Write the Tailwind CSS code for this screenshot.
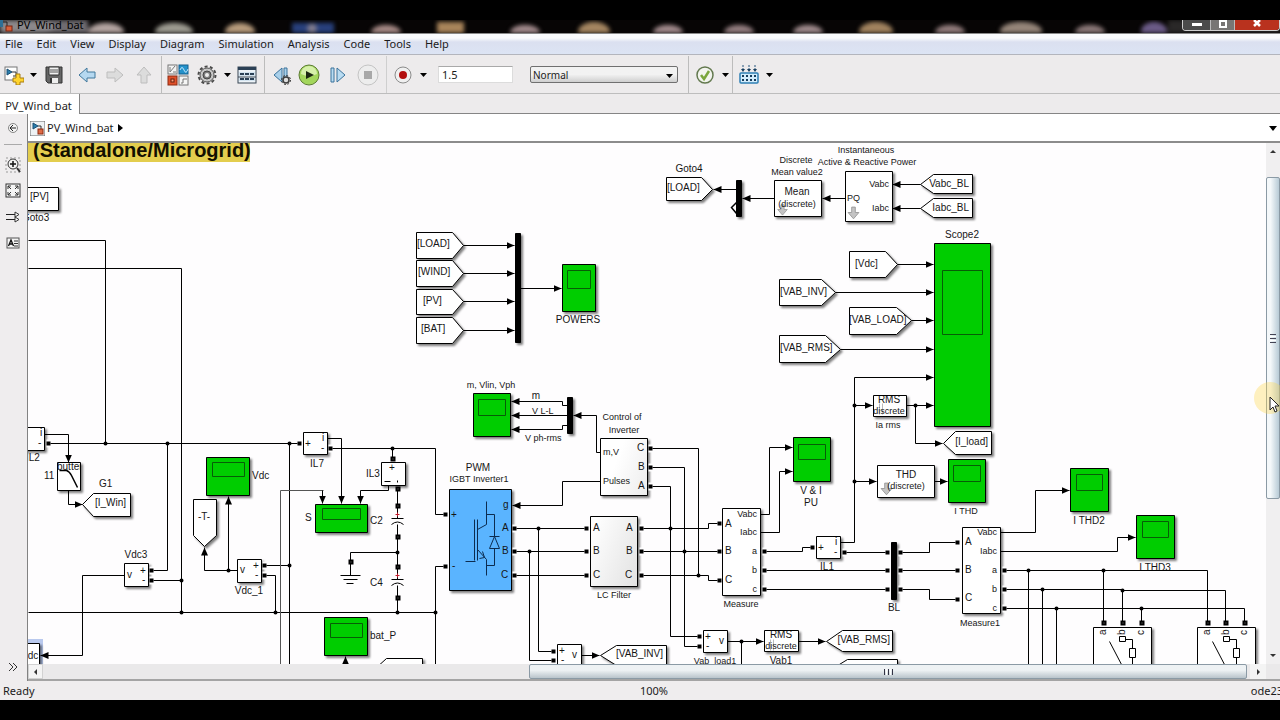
<!DOCTYPE html>
<html lang="en">
<head>
<meta charset="utf-8">
<meta name="viewport" content="width=device-width, initial-scale=1">
<title>PV_Wind_bat</title>
<script src="https://cdn.jsdelivr.net/npm/@tailwindcss/browser@4"></script>
</head>
<body class="flex min-h-screen flex-col overflow-hidden bg-black font-['Noto_Sans',sans-serif] text-[11px] text-[#1b1b1b]">

<!-- Window title bar -->
<header class="relative mt-5 flex h-[14px] shrink-0 items-start justify-between overflow-hidden border-b border-[#8a8a8a] bg-[#070505]">
  <svg class="absolute inset-0 h-full w-full blur-[2px]" viewBox="0 0 1280 14" preserveAspectRatio="none" aria-hidden="true">
    <rect x="0" y="0" width="88" height="14" fill="#6f6b70"/><ellipse cx="25" cy="7" rx="30" ry="9" fill="#8b888b"/>
    <ellipse cx="106" cy="13" rx="18" ry="10" fill="#b3a3a0"/><ellipse cx="174" cy="13" rx="19" ry="10" fill="#9c9a90"/>
    <ellipse cx="240" cy="13" rx="15" ry="10" fill="#b79b7c"/><rect x="292" y="3" width="42" height="12" fill="#28407c"/><circle cx="312" cy="9" r="5" fill="#7f7a8c"/>
    <ellipse cx="386" cy="14" rx="15" ry="9" fill="#a78a86"/><rect x="437" y="2" width="27" height="14" fill="#a8845a"/>
    <ellipse cx="525" cy="14" rx="15" ry="9" fill="#a28a8c"/><ellipse cx="594" cy="13" rx="16" ry="11" fill="#a48560"/>
    <ellipse cx="668" cy="14" rx="15" ry="9" fill="#a28a8c"/><ellipse cx="739" cy="14" rx="15" ry="9" fill="#947e80"/>
    <ellipse cx="808" cy="14" rx="15" ry="9" fill="#9f8a8c"/><ellipse cx="876" cy="13" rx="17" ry="11" fill="#a0825e"/>
    <ellipse cx="950" cy="14" rx="15" ry="9" fill="#927c7c"/><ellipse cx="1021" cy="12" rx="21" ry="10" fill="#948478"/>
    <ellipse cx="1090" cy="14" rx="15" ry="9" fill="#8b7878"/><ellipse cx="1154" cy="12" rx="13" ry="10" fill="#6a5a86"/>
    <rect x="1168" y="0" width="112" height="14" fill="#2a2828"/>
  </svg>
  <div class="relative flex h-full items-start">
    <svg class="h-[13px] w-4" viewBox="0 0 16 13" aria-hidden="true"><path d="M0 0h3v7H0z" fill="#2c6f96"/><path d="M3 2h4v5" fill="none" stroke="#222"/><rect x="6" y="6" width="6" height="5" fill="#d9603a" stroke="#7a2410"/></svg>
    <h1 class="pl-px leading-[10px] text-black">PV_Wind_bat</h1>
  </div>
  <div class="relative flex h-[11px] overflow-hidden rounded-b border-x border-b border-[#cfcfcf]">
    <button aria-label="Minimize" class="flex w-7 justify-center border-r border-[#bbb] bg-[#4b4b4b]"><span class="mt-[3px] block h-[3px] w-[10px] bg-white"></span></button>
    <button aria-label="Maximize" class="flex w-6 justify-center border-r border-[#bbb] bg-[#787674]"><span class="block h-2 w-2 border-2 border-white"></span></button>
    <button aria-label="Close" class="flex w-11 justify-center bg-[#b9321e]"><svg class="h-[7px] w-[10px]" viewBox="0 0 10 7"><path d="M2 0l6 6M8 0L2 6" stroke="#fff" stroke-width="2.5"/></svg></button>
  </div>
</header>

<!-- Menu -->
<nav class="flex h-[21px] shrink-0 items-center gap-[14px] border-b border-[#b3b5bd] bg-linear-to-b from-[#fafbfd] from-20% via-[#dbe0f0] via-40% to-[#dce4f4] pl-[5px] pt-px">
  <button>File</button><button>Edit</button><button>View</button><button>Display</button><button>Diagram</button><button>Simulation</button><button>Analysis</button><button>Code</button><button>Tools</button><button>Help</button>
</nav>

<!-- Toolbar -->
<div class="flex h-[39px] shrink-0 items-stretch border-b border-[#bdbdbd] bg-[#edebec] pt-px">
  <button aria-label="New model" class="flex w-7 items-center justify-center"><svg class="h-5 w-5" viewBox="0 0 20 20"><rect x="1" y="2" width="12" height="13" fill="#fff" stroke="#777"/><path d="M3 4l5 3-5 3z" fill="#2a7fae" stroke="#1b4f73"/><path d="M8 7h4v4M9 11h5" fill="none" stroke="#333"/><path d="M12 9h4v4h4v4h-4v3h-4v-3H9v-4h3z" fill="#ffd42e" stroke="#a77d10"/></svg></button>
  <button aria-label="New model options" class="flex w-[10px] items-center justify-center"><svg class="h-1 w-[7px]" viewBox="0 0 7 4"><path d="M0 0h7L3.500 4z"/></svg></button>
  <button aria-label="Save" class="flex w-8 items-center justify-center"><svg class="h-[18px] w-[18px]" viewBox="0 0 18 18"><path d="M1 1h16v16H3l-2-2z" fill="#666" stroke="#333"/><path d="M4 1h10v8H4z" fill="#f1f1f1" stroke="#333"/><path d="M5 4h8M5 6h8" stroke="#555"/><path d="M5 12h8v5H5z" fill="#eee"/><path d="M7 12v5h-2v-5z" fill="#333"/></svg></button>
  <span class="w-px bg-[#bcbcbc]"></span>
  <button aria-label="Back" class="flex w-8 items-center justify-center"><svg class="h-4 w-[18px]" viewBox="0 0 18 16"><path d="M1 8l8-7v4h8v6H9v4z" fill="#b5d8f0" stroke="#41789c"/></svg></button>
  <button aria-label="Forward" class="flex w-6 items-center justify-center"><svg class="h-4 w-[18px]" viewBox="0 0 18 16"><path d="M17 8L9 1v4H1v6h8v4z" fill="#dcdcdc" stroke="#bdbdbd"/></svg></button>
  <button aria-label="Up to parent" class="flex w-[34px] items-center justify-center"><svg class="h-[18px] w-4" viewBox="0 0 16 18"><path d="M8 1l7 8h-4v8H5V9H1z" fill="#dcdcdc" stroke="#bdbdbd"/></svg></button>
  <span class="w-px bg-[#bcbcbc]"></span>
  <button aria-label="Library browser" class="flex w-8 items-center justify-center"><svg class="h-[22px] w-[22px]" viewBox="0 0 22 22"><rect x="1" y="1" width="9" height="9" fill="#f3f3f3" stroke="#777"/><path d="M3 3v5M3 8l5-6M6 8h3" fill="none" stroke="#777"/><rect x="12" y="1" width="9" height="9" fill="#2492cb" stroke="#155f8c"/><path d="M13 6q2-5 4 0t4-1" fill="none" stroke="#bfe4fa"/><rect x="1" y="12" width="9" height="9" fill="#e0502a" stroke="#8d2a10"/><rect x="4" y="15" width="3" height="3" fill="#ff9a78" stroke="#64200e"/><rect x="12" y="12" width="9" height="9" fill="#f5f5f5" stroke="#777"/><path d="M14 19h2v-4h4" fill="none" stroke="#777"/></svg></button>
  <button aria-label="Model configuration" class="flex w-[26px] items-center justify-center"><svg class="h-5 w-5" viewBox="0 0 20 20"><circle cx="10" cy="10" r="8.500" fill="none" stroke="#4a4a4a" stroke-width="2" stroke-dasharray="3 2.340"/><circle cx="10" cy="10" r="7" fill="#c6c6c6" stroke="#555"/><circle cx="10" cy="10" r="4" fill="#7d7d7d" stroke="#444"/><circle cx="10" cy="10" r="2" fill="#ececec"/></svg></button>
  <button aria-label="Configuration options" class="flex w-[14px] items-center justify-center"><svg class="h-1 w-[7px]" viewBox="0 0 7 4"><path d="M0 0h7L3.500 4z"/></svg></button>
  <button aria-label="Model explorer" class="mr-1 flex w-[26px] items-center justify-center"><svg class="h-[18px] w-5" viewBox="0 0 20 18"><rect x="1" y="1" width="18" height="16" fill="#edf3f8" stroke="#394754"/><path d="M1 1h18v3H1z" fill="#2b4055"/><path d="M2 6h16v4H2zM2 12h16v3H2z" fill="#d4e4f0"/><path d="M3 8h14M3 13h14" stroke="#2b4055" stroke-width="2" stroke-dasharray="4 1"/><path d="M1 11h18" stroke="#394754"/></svg></button>
  <span class="w-px bg-[#bcbcbc]"></span>
  <button aria-label="Step back" class="flex w-[34px] items-center justify-center"><svg class="h-5 w-5" viewBox="0 0 20 20"><path d="M10 3v14L2 10z" fill="#a9d0ea" stroke="#3a729b"/><path d="M12 3h3v14h-3z" fill="#a9d0ea" stroke="#3a729b"/><circle cx="14" cy="15" r="3" fill="#ddd" stroke="#3c3c3c" stroke-width="1.500"/><circle cx="14" cy="15" r="4.500" fill="none" stroke="#3c3c3c" stroke-width="1" stroke-dasharray="2 1.500"/></svg></button>
  <button aria-label="Run" class="flex w-5 items-center justify-center"><svg class="h-[22px] w-5 overflow-visible" viewBox="0 0 20 22"><circle cx="10" cy="11" r="10" fill="#a3d65c" stroke="#5c7c33"/><path d="M2 10a8 8 0 0116 0q-8 4-16 0z" fill="#d6f0aa"/><path d="M7 7l8 4-8 4z" fill="#1c2811"/></svg></button>
  <button aria-label="Step forward" class="flex w-[38px] items-center justify-center"><svg class="h-4 w-4" viewBox="0 0 16 16"><path d="M1 1h3v14H1zM7 1l8 7-8 7z" fill="#b9dcf2" stroke="#3a729b"/></svg></button>
  <button aria-label="Stop" class="mr-[7px] flex w-[22px] items-center justify-center"><svg class="h-[22px] w-[22px]" viewBox="0 0 22 22"><circle cx="11" cy="11" r="10" fill="#ededed" stroke="#c4c4c4"/><rect x="7" y="7" width="8" height="8" fill="#a8a8a8"/></svg></button>
  <span class="w-px bg-[#cfcfcf]"></span>
  <button aria-label="Record" class="flex w-8 items-center justify-center"><svg class="h-[18px] w-[18px]" viewBox="0 0 18 18"><circle cx="9" cy="9" r="8" fill="#f0f0f0" stroke="#8b8b8b"/><circle cx="9" cy="9" r="4" fill="#b30f0f"/></svg></button>
  <button aria-label="Record options" class="flex w-2 items-center justify-center"><svg class="h-1 w-[7px]" viewBox="0 0 7 4"><path d="M0 0h7L3.500 4z"/></svg></button>
  <input aria-label="Simulation stop time" value="1.5" class="my-[10px] ml-[11px] w-[75px] border border-[#dcdcdc] border-t-[#a9a9a9] bg-white pl-[3px] pt-[2px] outline-none">
  <div class="relative my-[10px] ml-[17px] w-[148px]">
    <select aria-label="Simulation mode" class="h-full w-full appearance-none rounded-xs border border-[#707070] bg-linear-to-b from-[#f2f2f2] from-50% to-[#cfcfcf] pl-[2px] text-[10px] leading-[16px] outline-none"><option>Normal</option></select>
    <svg class="pointer-events-none absolute right-[5px] top-2 h-1 w-[7px]" viewBox="0 0 7 4"><path d="M0 0h7L3.500 4z"/></svg>
  </div>
  <span class="ml-[10px] w-px bg-[#bcbcbc]"></span>
  <button aria-label="Model advisor" class="flex w-8 items-center justify-center"><svg class="h-[18px] w-[18px]" viewBox="0 0 18 18"><circle cx="9" cy="9" r="8" fill="#f2f4ee" stroke="#63794f" stroke-width="1.500"/><path d="M5 9l3 4 5-8" fill="none" stroke="#7aa63c" stroke-width="2.500"/></svg></button>
  <button aria-label="Advisor options" class="mr-[3px] flex w-2 items-center justify-center"><svg class="h-1 w-[7px]" viewBox="0 0 7 4"><path d="M0 0h7L3.500 4z"/></svg></button>
  <span class="w-px bg-[#bcbcbc]"></span>
  <button aria-label="Build model" class="flex w-8 items-center justify-center"><svg class="h-5 w-5" viewBox="0 0 20 20"><path d="M4 0v5M10 0v5M16 0v5" stroke="#24557c" stroke-dasharray="2 1"/><path d="M2 4h4L4 7zM8 4h4l-2 3zM14 4h4l-2 3z" fill="#173d5c"/><rect x="1" y="8" width="18" height="10" rx="1" fill="#d3ecfb" stroke="#2e7fb4" stroke-width="1.500"/><path d="M3 11h14M3 15h14" stroke="#173d5c" stroke-width="2" stroke-dasharray="2 2"/></svg></button>
  <button aria-label="Build options" class="flex w-2 items-center justify-center"><svg class="h-1 w-[7px]" viewBox="0 0 7 4"><path d="M0 0h7L3.500 4z"/></svg></button>
</div>

<!-- Document tabs -->
<div class="flex h-5 shrink-0 bg-[#edebec]">
  <button class="w-20 border-r border-[#858585] bg-white pr-[2px] pt-[3px] text-center leading-4">PV_Wind_bat</button>
  <div class="flex-1 border-b border-[#858585]"></div>
</div>

<main class="flex flex-1 bg-[#efedee]">
  <!-- Editor palette -->
  <aside class="flex w-7 shrink-0 flex-col items-center border-r border-[#828282] pr-[2px] pt-2">
    <button aria-label="Hide browser"><svg class="h-3 w-3" viewBox="0 0 12 12"><circle cx="6" cy="6" r="4.500" fill="#f4f4f4" stroke="#888"/><path d="M9 6H4M6 3L3 6l3 3" fill="none" stroke="#222"/></svg></button>
    <span class="mt-[10px] h-px w-[18px] bg-[#aaa]"></span>
    <button aria-label="Zoom" class="mt-[11px]"><svg class="h-[18px] w-[18px]" viewBox="0 0 18 18"><rect x="2" y="2" width="14" height="14" fill="none" stroke="#999" stroke-dasharray="2 2"/><circle cx="9" cy="8" r="5" fill="#f2f2f2" stroke="#333"/><path d="M6 8h6M9 5v6" stroke="#111" stroke-width="1.500"/><path d="M13 12l3 4" stroke="#333" stroke-width="2"/></svg></button>
    <button aria-label="Fit to view" class="mt-[9px]"><svg class="h-[15px] w-4" viewBox="0 0 16 15"><rect x="1" y="1" width="14" height="13" fill="#f4f4f4" stroke="#333"/><path d="M3 6V3h3M10 3h3v3M13 9v3h-3M6 12H3V9M3 3l3 3M13 3l-3 3M13 12l-3-3M3 12l3-3" fill="none" stroke="#333"/></svg></button>
    <button aria-label="Sample time" class="mt-[13px]"><svg class="h-3 w-[14px]" viewBox="0 0 14 12"><path d="M0 3.500h10M0 8.500h10" stroke="#222"/><path d="M9 1l4 2.500L9 6zM9 6l4 2.500L9 11z" fill="#fff" stroke="#333"/></svg></button>
    <button aria-label="Annotation" class="mt-[14px]"><svg class="h-3 w-[14px]" viewBox="0 0 14 12"><rect x="1" y="1" width="12" height="10" fill="#f4f4f4" stroke="#555"/><path d="M2.500 9L5 3l2.500 6M3.500 7h3" fill="none" stroke="#111" stroke-width="1.300"/><path d="M8 4h4M8 6.500h4M8 9h4" stroke="#333"/></svg></button>
    <button aria-label="More tools" class="mb-2 mt-auto"><svg class="h-3 w-3" viewBox="0 0 12 12"><path d="M2 2l4 4-4 4M6 2l4 4-4 4" fill="none" stroke="#333"/></svg></button>
  </aside>

  <section class="flex min-w-0 flex-1 flex-col">
    <!-- Model path -->
    <div class="flex h-[29px] shrink-0 items-center border-b-2 border-[#8c8c8c] bg-white pt-px">
      <svg class="ml-[2px] h-[15px] w-[15px]" viewBox="0 0 15 15" aria-hidden="true"><rect x="0" y="0" width="15" height="15" fill="#eef2f4" stroke="#666"/><path d="M3 2l5 3-5 3z" fill="#2a7fae" stroke="#1b4f73"/><path d="M8 5h3v4" fill="none" stroke="#333"/><rect x="8" y="8" width="5" height="5" fill="#df6a45" stroke="#8d2a10"/></svg>
      <a href="#" class="ml-[2px]">PV_Wind_bat</a>
      <svg class="ml-1 h-2 w-[5px]" viewBox="0 0 5 8" aria-hidden="true"><path d="M0 0l5 4-5 4z"/></svg>
      <button aria-label="Path history" class="ml-auto pr-[3px]"><svg class="h-[5px] w-2" viewBox="0 0 8 5"><path d="M0 0h8L4 5z"/></svg></button>
    </div>

    <div class="flex flex-1">
      <!-- Block diagram -->
      <div class="relative min-w-0 flex-1 overflow-hidden bg-[#fefdfe]">
        <svg width="1238" height="521" viewBox="28 143 1238 521" role="img" aria-label="PV_Wind_bat block diagram" class="block">
          <defs>
            <marker id="arrow" markerUnits="userSpaceOnUse" markerWidth="8" markerHeight="8" refX="8" refY="4" orient="auto"><path d="M0 0.500L8 4L0 7.500z"/></marker>
            <clipPath id="clipButter"><rect x="57" y="463" width="23" height="27"/></clipPath>
            <clipPath id="clipRms"><rect x="873" y="396" width="33" height="20"/></clipPath>
            <clipPath id="clipRms2"><rect x="764" y="631" width="34" height="20"/></clipPath>
            <clipPath id="clipThd"><rect x="1130" y="560" width="50" height="10"/></clipPath>
            <linearGradient id="subsystem" x1="0" y1="0" x2="1" y2="1"><stop offset="0.300" stop-color="#fff"/><stop offset="1" stop-color="#dedede"/></linearGradient>
            <path id="gray-down" d="M-2 -6h4v6h4l-6 7-6-7h4z"/>
            <path id="ports" d="M46 443h4M262 565h4M262 575h4M149 570h4M149 580h4M297 443h4M328 448h4M443 514h4M443 566h4M512 528h4M512 551h4M512 575h4M648 448h4M648 467h4M648 486h4M584 528h4M584 551h4M584 575h4M639 528h4M639 551h4M639 575h4M551 651h4M551 660h4M697 636h4M697 646h4M717 523h4M717 551h4M717 580h4M762 551h4M762 570h4M762 589h4M810 547h4M842 552h4M885 552h4M885 570h4M885 589h4M898 552h4M898 570h4M898 589h4M955 542h4M955 570h4M955 599h4M1002 570h4M1002 589h4M1002 608h4"/>
          </defs>

          <rect x="28" y="143" width="222" height="19" fill="#e3cd4e"/>
          <rect x="28" y="639" width="15" height="25" fill="#b9c9ee"/>

          <g transform="translate(0.500 0.500)" stroke="#000" fill="#fff">
            <g class="drop-shadow-[2px_2px_1px_rgba(0,0,0,0.5)]">
              <path d="M20 187H58V210H20zM20 427H44V450H20zM57 462H80V490H57zM82 504L93 493H130V516H93zM193 499H216V535L204 546L193 535zM237 559H261V582H237zM124 563H148V586H124zM20 643H39V670H20zM303 432H327V454H303zM381 462H405V485H381zM375 668L386 658H422V670z"/>
              <path d="M416 232H452L463 245L452 258H416zM416 260H452L463 273L452 286H416zM416 289H452L463 301L452 314H416zM416 317H452L463 330L452 343H416z"/>
              <path d="M557 644H581V670H557zM600 655L616 645H666V670H624zM703 630H727V652H703zM764 630H798V651H764zM826 641L842 630H892V651H842zM834 667L847 659H897V670z"/>
              <path d="M722 508H760V595H722zM816 536H840V558H816zM962 527H1000V613H962zM873 395H906V416H873zM943 443L955 431H991V454H955zM877 465H934V497H877z"/>
              <path d="M666 177H701L712 189L701 200H666zM774 180H821V216H774zM845 171H892V221H845zM920 184L933 174H972V193H933zM920 208L933 198H972V217H933z"/>
              <path d="M849 251H885L897 264L885 277H849zM779 279H821L835 292L821 305H779zM849 307H896L911 320L896 334H849zM779 335H825L840 349L825 362H779zM1093 627H1151V670H1093zM1197 627H1255V670H1197z"/>
              <path fill="url(#subsystem)" d="M600 438H647V495H600zM590 516H637V586H590z"/>
              <path fill="#00cd00" d="M206 457H249V495H206zM315 504H367V532H315zM324 617H367V655H324zM473 393H510V436H473zM562 264H595V311H562zM793 437H830V481H793zM948 459H985V502H948zM934 243H990V426H934zM1070 468H1108V511H1070zM1136 515H1174V558H1136z"/>
              <path fill="#5ab4ff" d="M449 489H511V590H449z"/>
              <path fill="#000" d="M515 233H520V342H515zM567 397H572V433H567zM736 180H741V216H736zM891 542H896V599H891z"/>
            </g>

            <g fill="none">
              <path stroke="#075d07" d="M212 462H244V476H212zM322 508H360V519H322zM330 623H362V637H330zM478 399H505V415H478zM567 270H590V288H567zM798 444H825V459H798zM953 465H980V481H953zM942 270H982V334H942zM1076 474H1102V490H1076zM1142 521H1168V537H1142z"/>
              <use href="#ports" stroke="#fefdfe" stroke-width="8"/>
              <!-- Signal and power lines -->
              <path d="M28 240H105V443M28 268H181V612M50 443H297M266 565H289M266 575H275V612M153 570H167V443M153 580H181M28 612H435M289 443V664M332 448H435V514H443M392 448V458M443 566H435V664"/>
              <path stroke="#555" d="M280 664V490H323"/>
              <path d="M516 528H584M516 551H584M516 575H584M538 528V651H551M529 551V660H551M652 448H698V575M652 467H684V646H697M652 486H670V636H697M643 528H708V523H717M643 551H717M643 575H708V580H717"/>
              <path d="M766 551H802V547H810M766 570H885M766 589H885M846 552H885M902 552H929V542H955M902 570H955M902 589H929V599H955M741 641V664M840 542H854V377"/>
              <path d="M1006 570H1207V621M1006 589H1122V590H1225V621M1006 608H1244V621M1028 570V664M1042 589V664M1056 608V664M1103 570V621M1122 590V621M1141 608V621"/>
              <path d="M397 487V518M397 524V579M397 585V612M391 518H403M391 524Q397 519 403 524M391 579H403M391 585Q397 580 403 585M397 552H350V575M340 575H360M343 579H357M346 583H353"/>
              <path stroke="#c01c2c" d="M395 514H399M397 512V516M395 575H399M397 573V577"/>
              <g marker-end="url(#arrow)">
                <path d="M44 434H68V462"/><path d="M68 490V504H82"/><path d="M228 570V496"/><path d="M237 570H204V547"/><path d="M124 575H82V655H40"/>
                <path d="M327 438H341V503"/><path d="M388 485V490H360V503"/><path d="M322 490V503"/><path d="M345 664V656"/>
                <path d="M463 245H514"/><path d="M463 273H514"/><path d="M463 301H514"/><path d="M463 330H514"/><path d="M520 288H561"/>
                <path d="M567 405H562V401H511"/><path d="M567 415H511"/><path d="M567 425H562V429H511"/><path d="M600 452H596V415H573"/><path d="M600 481H562V505H512"/>
                <path d="M581 655H599"/><path d="M727 641H763"/><path d="M798 641H825"/>
                <path d="M760 514H769V447H792"/><path d="M760 532H779V471H792"/><path d="M854 377H933"/><path d="M854 405H872"/><path d="M906 405H933"/><path d="M915 405V443H942"/><path d="M854 481H876"/><path d="M934 481H947"/>
                <path d="M736 189H713"/><path d="M774 198H742"/><path d="M845 198H822"/><path d="M920 184H892"/><path d="M920 208H892"/>
                <path d="M897 264H933"/><path d="M835 292H933"/><path d="M911 320H933"/><path d="M840 349H933"/>
                <path d="M1000 532H1035V490H1069"/><path d="M1000 551H1117V537H1135"/>
              </g>
              <use href="#ports" stroke-width="4"/>
              <path fill="#777" stroke-width="2" d="M391 457H394V460H391zM396 487H399V490H396zM396 504H399V507H396zM396 535H399V538H396zM396 565H399V568H396zM396 596H399V599H396zM349 560H352V563H349zM1102 621H1105V624H1102zM1121 621H1124V624H1121zM1140 621H1143V624H1140zM1206 621H1209V624H1206zM1224 621H1227V624H1224zM1243 621H1246V624H1243z"/>
              <path stroke-width="4" stroke-linecap="round" d="M105 443h.01M167 443h.01M289 443h.01M181 580h.01M181 612h.01M228 570h.01M275 612h.01M289 565h.01M392 448h.01M397 552h.01M397 612h.01M435 612h.01M538 528h.01M529 551h.01M670 528h.01M684 551h.01M698 575h.01M741 641h.01M854 405h.01M854 481h.01M915 405h.01M1028 570h.01M1042 589h.01M1056 608h.01M1103 570h.01M1122 590h.01M1141 608h.01"/>
              <!-- Block artwork -->
              <path stroke-width="1.500" d="M59 470H66Q69 471 71 475L77 487M736 202L731 207L736 213"/>
              <path stroke="#0c2c50" d="M474 519V560M477 519V560M465 561H475M486 501V524L477 529M477 549L486 559V575M486 514H494V536M489 536H499M489 548H499L494 536zM494 548V565H486M479 558L484 557L482 551"/>
              <path d="M384 481H390M397 480V482M1119 636H1125V641H1119zM1125 639H1132V648M1129 648H1135V657H1129zM1132 657V664M1109 641L1121 664M1223 636H1229V641H1223zM1229 639H1236V648M1233 648H1239V657H1233zM1236 657V664M1212 641L1224 664"/>
            </g>
            <g fill="#c4c4c4" stroke="#999">
              <use href="#gray-down" transform="translate(782 209) scale(.8)"/><use href="#gray-down" transform="translate(853 212) scale(.9)"/><use href="#gray-down" transform="translate(886 488) scale(.9)"/>
              <path stroke="#bbb" fill="none" d="M879 403V414M882 403V414M770 639V650M773 639V650"/>
            </g>
          </g>

          <g class="font-['Liberation_Sans',Arial,sans-serif] text-[10px]" fill="#161616">
            <text x="33" y="157" class="text-[20px] font-bold" fill="#120f00">(Standalone/Microgrid)</text>
            <text x="30" y="200">[PV]</text><text x="22" y="221">Goto3</text>
            <text x="40" y="436">i</text><text x="38" y="446">-</text><text x="26" y="461">IL2</text>
            <text x="57" y="470" clip-path="url(#clipButter)">butter</text><text x="44" y="479">11</text><text x="99" y="487">G1</text><text x="95" y="506">[I_Win]</text>
            <text x="252" y="479">Vdc</text><text x="204" y="520" text-anchor="middle">-T-</text>
            <text x="240" y="573">v</text><text x="253" y="569">+</text><text x="255" y="578">-</text><text x="249" y="594" text-anchor="middle">Vdc_1</text>
            <text x="127" y="578">v</text><text x="140" y="574">+</text><text x="142" y="583">-</text><text x="136" y="558" text-anchor="middle">Vdc3</text><text x="21" y="659">Vdc</text>
            <text x="305" y="447">+</text><text x="322" y="441">i</text><text x="321" y="451">-</text><text x="317" y="467" text-anchor="middle">IL7</text>
            <text x="366" y="477">IL3</text><text x="389" y="471">+</text><text x="305" y="521">S</text><text x="370" y="524">C2</text><text x="370" y="586">C4</text><text x="370" y="639">bat_P</text>
            <text x="478" y="471" text-anchor="middle">PWM</text><text x="479" y="482" class="text-[9px]" text-anchor="middle">IGBT Inverter1</text>
            <text x="451" y="518">+</text><text x="452" y="569">-</text><text x="503" y="508">g</text><text x="502" y="531">A</text><text x="502" y="554">B</text><text x="501" y="578">C</text>
            <text x="491" y="388" class="text-[9px]" text-anchor="middle">m, Vlin, Vph</text><text x="536" y="399" text-anchor="middle">m</text><text x="532" y="414" class="text-[9px]">V L-L</text><text x="525" y="441" class="text-[9px]">V ph-rms</text>
            <text x="417" y="247">[LOAD]</text><text x="418" y="275">[WIND]</text><text x="423" y="304">[PV]</text><text x="421" y="332">[BAT]</text><text x="578" y="323" text-anchor="middle">POWERS</text>
            <g class="text-[9px]" text-anchor="middle"><text x="622" y="420">Control of</text><text x="624" y="433">Inverter</text></g>
            <text x="603" y="455" class="text-[9px]">m,V</text><text x="603" y="484" class="text-[9px]">Pulses</text><text x="637" y="451">C</text><text x="638" y="470">B</text><text x="638" y="489">A</text>
            <text x="593" y="531">A</text><text x="593" y="554">B</text><text x="593" y="578">C</text><text x="626" y="531">A</text><text x="626" y="554">B</text><text x="625" y="578">C</text><text x="614" y="598" class="text-[9px]" text-anchor="middle">LC Filter</text>
            <text x="559" y="654">+</text><text x="561" y="663">-</text><text x="572" y="658">v</text><text x="663" y="657" text-anchor="end">[VAB_INV]</text>
            <text x="705" y="640">+</text><text x="706" y="649">-</text><text x="719" y="644">v</text><text x="715" y="664" class="text-[9px]" text-anchor="middle">Vab_load1</text>
            <text x="781" y="638" text-anchor="middle" clip-path="url(#clipRms2)">RMS</text><text x="781" y="649" text-anchor="middle" class="text-[9px]">discrete</text><text x="781" y="664" text-anchor="middle">Vab1</text><text x="890" y="643" text-anchor="end">[VAB_RMS]</text>
            <text x="725" y="527">A</text><text x="725" y="554">B</text><text x="725" y="583">C</text><text x="741" y="607" class="text-[9px]" text-anchor="middle">Measure</text>
            <g text-anchor="end" class="text-[9px]"><text x="757" y="517">Vabc</text><text x="757" y="535">Iabc</text><text x="757" y="554">a</text><text x="757" y="573">b</text><text x="757" y="592">c</text><text x="997" y="535">Vabc</text><text x="997" y="554">Iabc</text><text x="997" y="573">a</text><text x="997" y="592">b</text><text x="997" y="611">c</text><text x="889" y="187">Vabc</text><text x="889" y="211">Iabc</text></g>
            <text x="818" y="551">+</text><text x="835" y="545">i</text><text x="834" y="555">-</text><text x="827" y="570" text-anchor="middle">IL1</text><text x="894" y="611" text-anchor="middle">BL</text>
            <text x="811" y="494" text-anchor="middle">V &amp; I</text><text x="811" y="506" text-anchor="middle">PU</text>
            <text x="889" y="403" text-anchor="middle" clip-path="url(#clipRms)">RMS</text><text x="889" y="414" text-anchor="middle" class="text-[9px]">discrete</text><text x="888" y="428" class="text-[9px]" text-anchor="middle">Ia rms</text><text x="988" y="445" text-anchor="end">[I_load]</text>
            <text x="906" y="478" text-anchor="middle">THD</text><text x="906" y="489" class="text-[9px]" text-anchor="middle">(discrete)</text><text x="966" y="514" text-anchor="middle" class="text-[9px]">I THD</text>
            <text x="965" y="545">A</text><text x="965" y="573">B</text><text x="965" y="601">C</text><text x="980" y="626" class="text-[9px]" text-anchor="middle">Measure1</text><text x="962" y="238" text-anchor="middle">Scope2</text>
            <text x="689" y="172" text-anchor="middle">Goto4</text><text x="667" y="191">[LOAD]</text>
            <g class="text-[9px]" text-anchor="middle"><text x="796" y="163">Discrete</text><text x="797" y="175">Mean value2</text><text x="866" y="153">Instantaneous</text><text x="867" y="165">Active &amp; Reactive Power</text></g>
            <text x="797" y="195" text-anchor="middle">Mean</text><text x="797" y="207" class="text-[9px]" text-anchor="middle">(discrete)</text><text x="847" y="201" class="text-[9px]">PQ</text>
            <text x="969" y="187" text-anchor="end">Vabc_BL</text><text x="969" y="211" text-anchor="end">Iabc_BL</text>
            <text x="855" y="267">[Vdc]</text><text x="780" y="295">[VAB_INV]</text><text x="849" y="323">[VAB_LOAD]</text><text x="780" y="351">[VAB_RMS]</text>
            <text x="1089" y="524" text-anchor="middle">I THD2</text><text x="1155" y="571" text-anchor="middle" clip-path="url(#clipThd)">I THD3</text>
            <text transform="translate(1106 635) rotate(-90)">a</text><text transform="translate(1125 635) rotate(-90)">b</text><text transform="translate(1144 635) rotate(-90)">c</text>
            <text transform="translate(1210 635) rotate(-90)">a</text><text transform="translate(1229 635) rotate(-90)">b</text><text transform="translate(1247 635) rotate(-90)">c</text>
          </g>
        </svg>
      </div>

      <!-- Vertical scroll bar, with the pointer over its thumb -->
      <div class="relative flex w-[14px] shrink-0 flex-col items-center bg-[#f0eff0]">
        <button aria-label="Scroll up" class="flex h-[17px] w-full items-center justify-center"><svg class="h-[3px] w-[6px]" viewBox="0 0 6 3"><path d="M0 3h6L3 0z" fill="#333"/></svg></button>
        <div class="mt-[17px] flex h-[322px] w-full flex-col items-center justify-center gap-px rounded-xs border border-[#8b9aa5] bg-linear-to-r from-[#f4f8fa] from-30% to-[#b8cbd6]"><span class="h-px w-[6px] bg-[#445]"></span><span class="h-px w-[6px] bg-[#fff]"></span><span class="h-px w-[6px] bg-[#445]"></span><span class="h-px w-[6px] bg-[#fff]"></span><span class="h-px w-[6px] bg-[#445]"></span></div>
        <button aria-label="Scroll down" class="mt-auto flex h-[17px] w-full items-center justify-center"><svg class="h-[3px] w-[6px]" viewBox="0 0 6 3"><path d="M0 0h6L3 3z" fill="#333"/></svg></button>
        <div class="pointer-events-none absolute -left-3 top-[239px] size-8 rounded-full bg-[#ffd84a]/35"></div>
        <svg class="pointer-events-none absolute left-[3px] top-[253px] h-[18px] w-3" viewBox="0 0 12 18" aria-hidden="true"><path d="M1 1v13l3-3 2 5 2-1-2-5h4z" fill="#fff" stroke="#222"/></svg>
      </div>
    </div>

    <!-- Horizontal scroll bar -->
    <div class="flex h-[17px] shrink-0 items-stretch border-b-2 border-[#a4a4a4] bg-[#eae9ea]">
      <button aria-label="Scroll left" class="flex w-[15px] items-center justify-center border border-[#d2d2d2] bg-[#f4f4f4]"><svg class="h-[6px] w-[3px]" viewBox="0 0 3 6"><path d="M3 0v6L0 3z" fill="#333"/></svg></button>
      <div class="grid min-w-0 flex-1 grid-cols-[486fr_718fr_3fr]">
        <div></div>
        <div class="flex items-center justify-center gap-px rounded-xs border border-[#8b9aa5] bg-linear-to-b from-[#eef2f4] from-40% to-[#b9c4cb]"><span class="h-[6px] w-px bg-[#334]"></span><span class="h-[6px] w-px bg-[#fff]"></span><span class="h-[6px] w-px bg-[#334]"></span><span class="h-[6px] w-px bg-[#fff]"></span><span class="h-[6px] w-px bg-[#334]"></span></div>
      </div>
      <button aria-label="Scroll right" class="mr-[14px] flex w-4 items-center justify-center bg-[#f4f4f4]"><svg class="h-[6px] w-[3px]" viewBox="0 0 3 6"><path d="M0 0v6l3-3z" fill="#333"/></svg></button>
    </div>
  </section>
</main>

<!-- Status bar -->
<footer class="mb-5 grid h-[19px] shrink-0 grid-cols-[1fr_auto_1fr] items-center overflow-hidden bg-[#efedee] px-[3px] pt-px">
  <span>Ready</span>
  <span class="pl-7">100%</span>
  <span class="-mr-[10px] justify-self-end">ode23t</span>
</footer>
</body>
</html>
